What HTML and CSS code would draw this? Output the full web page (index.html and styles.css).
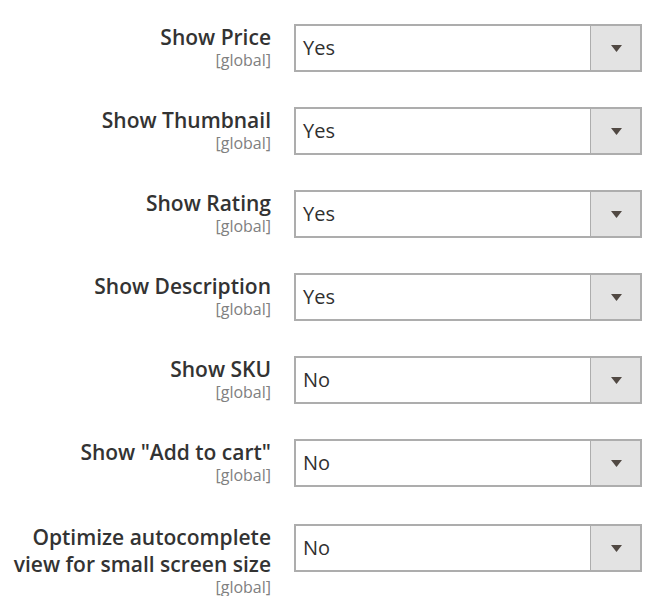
FILE: index.html
```html
<!DOCTYPE html>
<html>
<head>
<meta charset="utf-8">
<link rel="stylesheet" href="styles.css">
</head>
<body>
<div class="form">
  <div class="row">
    <div class="label"><span class="name">Show Price</span><span class="scope">[global]</span></div>
    <div class="select"><span class="value">Yes</span><span class="arrow"><svg width="11" height="7" viewBox="0 0 11 7"><path d="M0 0H11L5.5 7Z" fill="#514943"/></svg></span></div>
  </div>
  <div class="row">
    <div class="label"><span class="name">Show Thumbnail</span><span class="scope">[global]</span></div>
    <div class="select"><span class="value">Yes</span><span class="arrow"><svg width="11" height="7" viewBox="0 0 11 7"><path d="M0 0H11L5.5 7Z" fill="#514943"/></svg></span></div>
  </div>
  <div class="row">
    <div class="label"><span class="name">Show Rating</span><span class="scope">[global]</span></div>
    <div class="select"><span class="value">Yes</span><span class="arrow"><svg width="11" height="7" viewBox="0 0 11 7"><path d="M0 0H11L5.5 7Z" fill="#514943"/></svg></span></div>
  </div>
  <div class="row">
    <div class="label"><span class="name">Show Description</span><span class="scope">[global]</span></div>
    <div class="select"><span class="value">Yes</span><span class="arrow"><svg width="11" height="7" viewBox="0 0 11 7"><path d="M0 0H11L5.5 7Z" fill="#514943"/></svg></span></div>
  </div>
  <div class="row">
    <div class="label"><span class="name">Show SKU</span><span class="scope">[global]</span></div>
    <div class="select"><span class="value">No</span><span class="arrow"><svg width="11" height="7" viewBox="0 0 11 7"><path d="M0 0H11L5.5 7Z" fill="#514943"/></svg></span></div>
  </div>
  <div class="row">
    <div class="label"><span class="name">Show "Add to cart"</span><span class="scope">[global]</span></div>
    <div class="select"><span class="value">No</span><span class="arrow"><svg width="11" height="7" viewBox="0 0 11 7"><path d="M0 0H11L5.5 7Z" fill="#514943"/></svg></span></div>
  </div>
  <div class="row row-last">
    <div class="label"><span class="name">Optimize autocomplete view for small screen size</span><span class="scope">[global]</span></div>
    <div class="select"><span class="value">No</span><span class="arrow"><svg width="11" height="7" viewBox="0 0 11 7"><path d="M0 0H11L5.5 7Z" fill="#514943"/></svg></span></div>
  </div>
</div>
</body>
</html>
```
FILE: styles.css
```css
html, body {
  margin: 0;
  padding: 0;
  background: #ffffff;
}

body {
  font-family: "Open Sans", "Noto Sans", sans-serif;
  color: #303030;
}

.form {
  display: flex;
  flex-direction: column;
  gap: 35px;
  padding-top: 24px;
}

.row {
  display: grid;
  grid-template-columns: 271px 348px;
  column-gap: 23px;
  align-items: start;
}

.row-last {
  margin-top: 2px;
}

.label {
  display: flex;
  flex-direction: column;
  align-items: flex-end;
  text-align: right;
}

.name {
  font-size: 21px;
  font-weight: 600;
  line-height: 27px;
  color: #333333;
}

.scope {
  font-size: 16px;
  font-weight: 400;
  line-height: 18px;
  color: #808080;
}

.select {
  display: flex;
  height: 48px;
  box-sizing: border-box;
  border: 2px solid #adadad;
  background: #ffffff;
}

.value {
  flex: 1;
  padding-left: 7px;
  font-size: 20px;
  line-height: 44px;
  color: #303030;
}

.arrow {
  width: 48px;
  display: flex;
  align-items: center;
  justify-content: center;
  background: #e3e3e3;
  border-left: 1px solid #adadad;
  padding-left: 1px;
}

.arrow svg {
  display: block;
}
```
